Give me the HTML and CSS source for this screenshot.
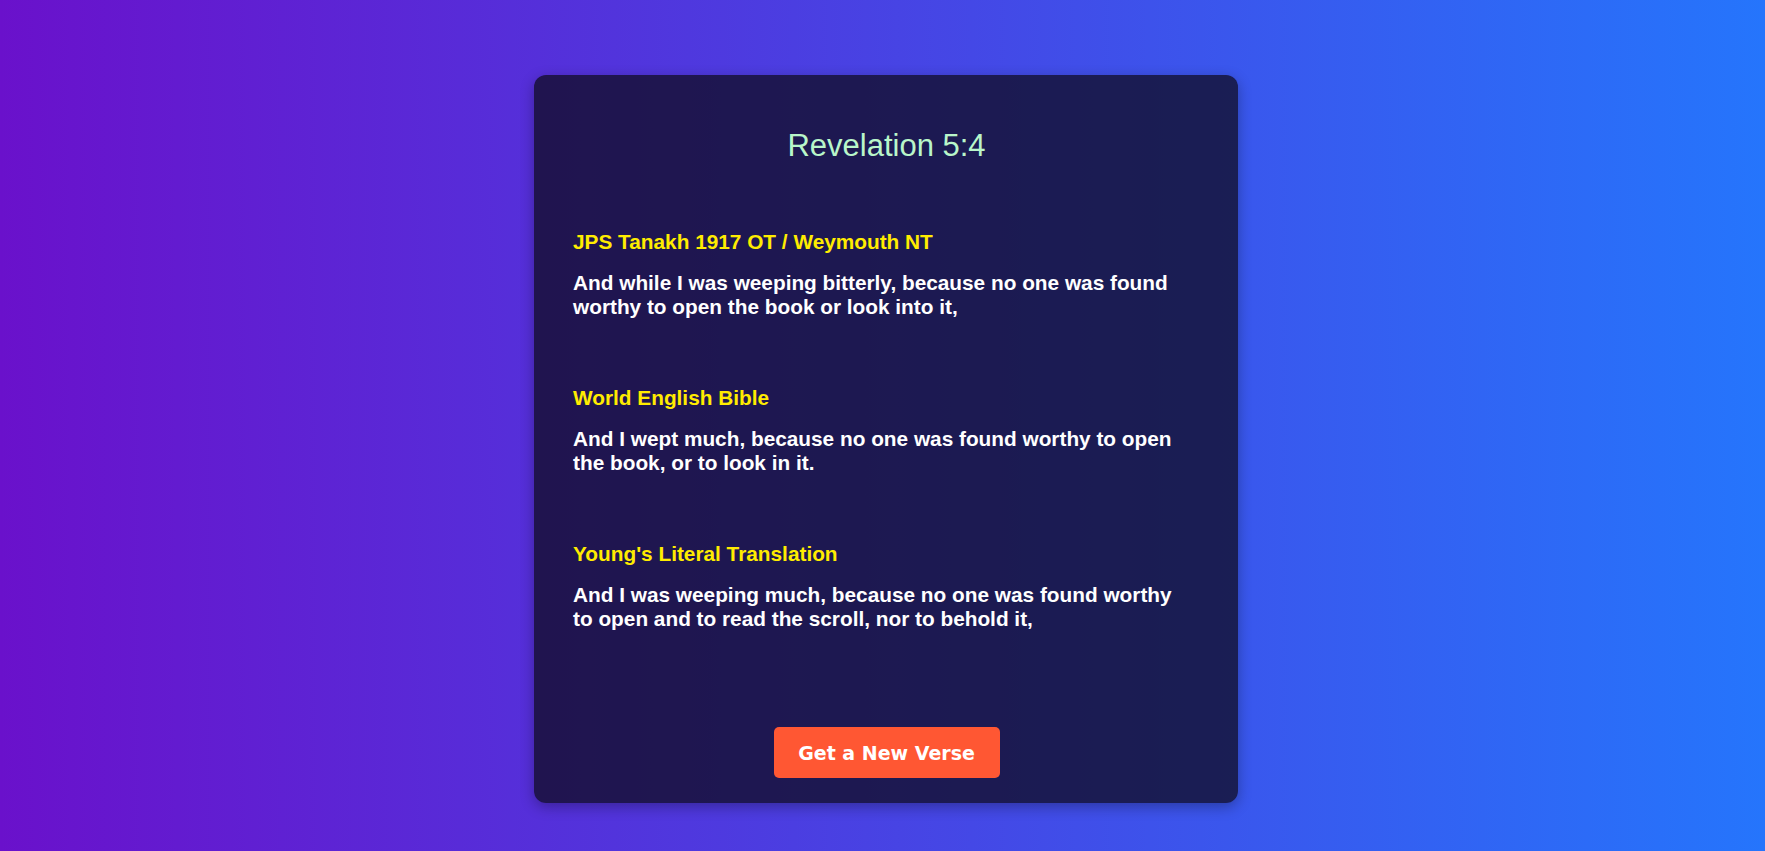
FILE: index.html
```html
<!DOCTYPE html>
<html lang="en">
<head>
<meta charset="utf-8">
<title>Random Bible Verse</title>
<link rel="stylesheet" href="styles.css">
</head>
<body>
<main class="page">
  <section class="card">
    <h1 class="ref">Revelation 5:4</h1>
    <div class="verses">
      <article class="verse">
        <h2 class="version">JPS Tanakh 1917 OT / Weymouth NT</h2>
        <p class="text">And while I was weeping bitterly, because no one was found worthy to open the book or look into it,</p>
      </article>
      <article class="verse">
        <h2 class="version">World English Bible</h2>
        <p class="text">And I wept much, because no one was found worthy to open the book, or to look in it.</p>
      </article>
      <article class="verse">
        <h2 class="version">Young's Literal Translation</h2>
        <p class="text">And I was weeping much, because no one was found worthy to open and to read the scroll, nor to behold it,</p>
      </article>
    </div>
    <button class="btn" type="button">Get a New Verse</button>
  </section>
</main>
</body>
</html>
```
FILE: styles.css
```css
html, body {
  margin: 0;
  padding: 0;
  height: 100%;
}
body {
  background: linear-gradient(to right, #6a11cb, #2575fc);
  font-family: "Liberation Sans", Arial, sans-serif;
  color: #fff;
}
.page {
  display: flex;
  justify-content: center;
  padding: 75px 0 0 7px;
}
.card {
  box-sizing: border-box;
  width: 704px;
  height: 728px;
  padding: 0 38px 25px 39px;
  border-radius: 12px;
  background: rgba(16, 12, 36, 0.76);
  box-shadow: 0 4px 14px rgba(0, 0, 0, 0.3);
  display: flex;
  flex-direction: column;
  align-items: stretch;
}
.ref {
  margin: 53px 0 0;
  text-align: center;
  font-size: 31px;
  font-weight: normal;
  color: #b9f6ca;
}
.verses {
  margin-top: 66px;
  max-width: 612px;
  display: flex;
  flex-direction: column;
  gap: 67px;
}
.verse {
  display: flex;
  flex-direction: column;
  gap: 17px;
}
.version {
  margin: 0;
  font-size: 20.8px;
  font-weight: bold;
  color: #ffec00;
}
.text {
  margin: 0;
  font-size: 20.8px;
  line-height: 24px;
  font-weight: bold;
  color: #fff;
}
.btn {
  margin-top: auto;
  align-self: center;
  width: 226px;
  height: 51px;
  border: 0;
  border-radius: 5px;
  background: #ff5733;
  color: #fff;
  font-family: "DejaVu Sans", Verdana, sans-serif;
  font-weight: bold;
  font-size: 19px;
  cursor: pointer;
}
```
